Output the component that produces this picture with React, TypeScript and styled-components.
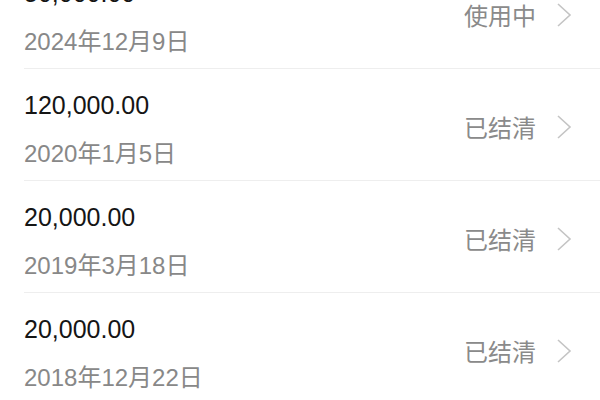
import styled, { createGlobalStyle } from "styled-components";

const GlobalStyle = createGlobalStyle`
  html, body {
    margin: 0;
    padding: 0;
    background: #ffffff;
    overflow: hidden;
  }
  body {
    font-family: "Liberation Sans", "Noto Sans CJK SC", sans-serif;
  }
`;

const List = styled.ul`
  list-style: none;
  margin: -44px 0 0 0;
  padding: 0;
`;

const Row = styled.li`
  display: flex;
  align-items: center;
  justify-content: space-between;
  height: 112px;
  box-sizing: border-box;
  margin-left: 24px;
  padding: 0 28px 0 0;
  border-top: 1px solid #eeeeee;
`;

const Info = styled.div`
  align-self: flex-start;
  display: flex;
  flex-direction: column;
  gap: 19px;
  padding-top: 21px;
`;

const Amount = styled.div`
  font-size: 25px;
  line-height: 30px;
  color: #151515;
`;

const DateText = styled.div`
  font-size: 24px;
  line-height: 30px;
  color: #888888;
`;

const Status = styled.div`
  display: flex;
  align-items: center;
  gap: 20px;
  padding-top: 4px;
  font-size: 24px;
  color: #8a8a8a;
`;

const Chevron = () => (
  <svg width="16" height="24" viewBox="0 0 16 24" fill="none">
    <path d="M2 1 L14 12 L2 23" stroke="#c4c4c4" strokeWidth="1.6" />
  </svg>
);

const records = [
  { amount: "50,000.00", date: "2024年12月9日", status: "使用中" },
  { amount: "120,000.00", date: "2020年1月5日", status: "已结清" },
  { amount: "20,000.00", date: "2019年3月18日", status: "已结清" },
  { amount: "20,000.00", date: "2018年12月22日", status: "已结清" },
];

export default function App() {
  return (
    <>
      <GlobalStyle />
      <List>
        {records.map((r, i) => (
          <Row key={i}>
            <Info>
              <Amount>{r.amount}</Amount>
              <DateText>{r.date}</DateText>
            </Info>
            <Status>
              {r.status}
              <Chevron />
            </Status>
          </Row>
        ))}
      </List>
    </>
  );
}
